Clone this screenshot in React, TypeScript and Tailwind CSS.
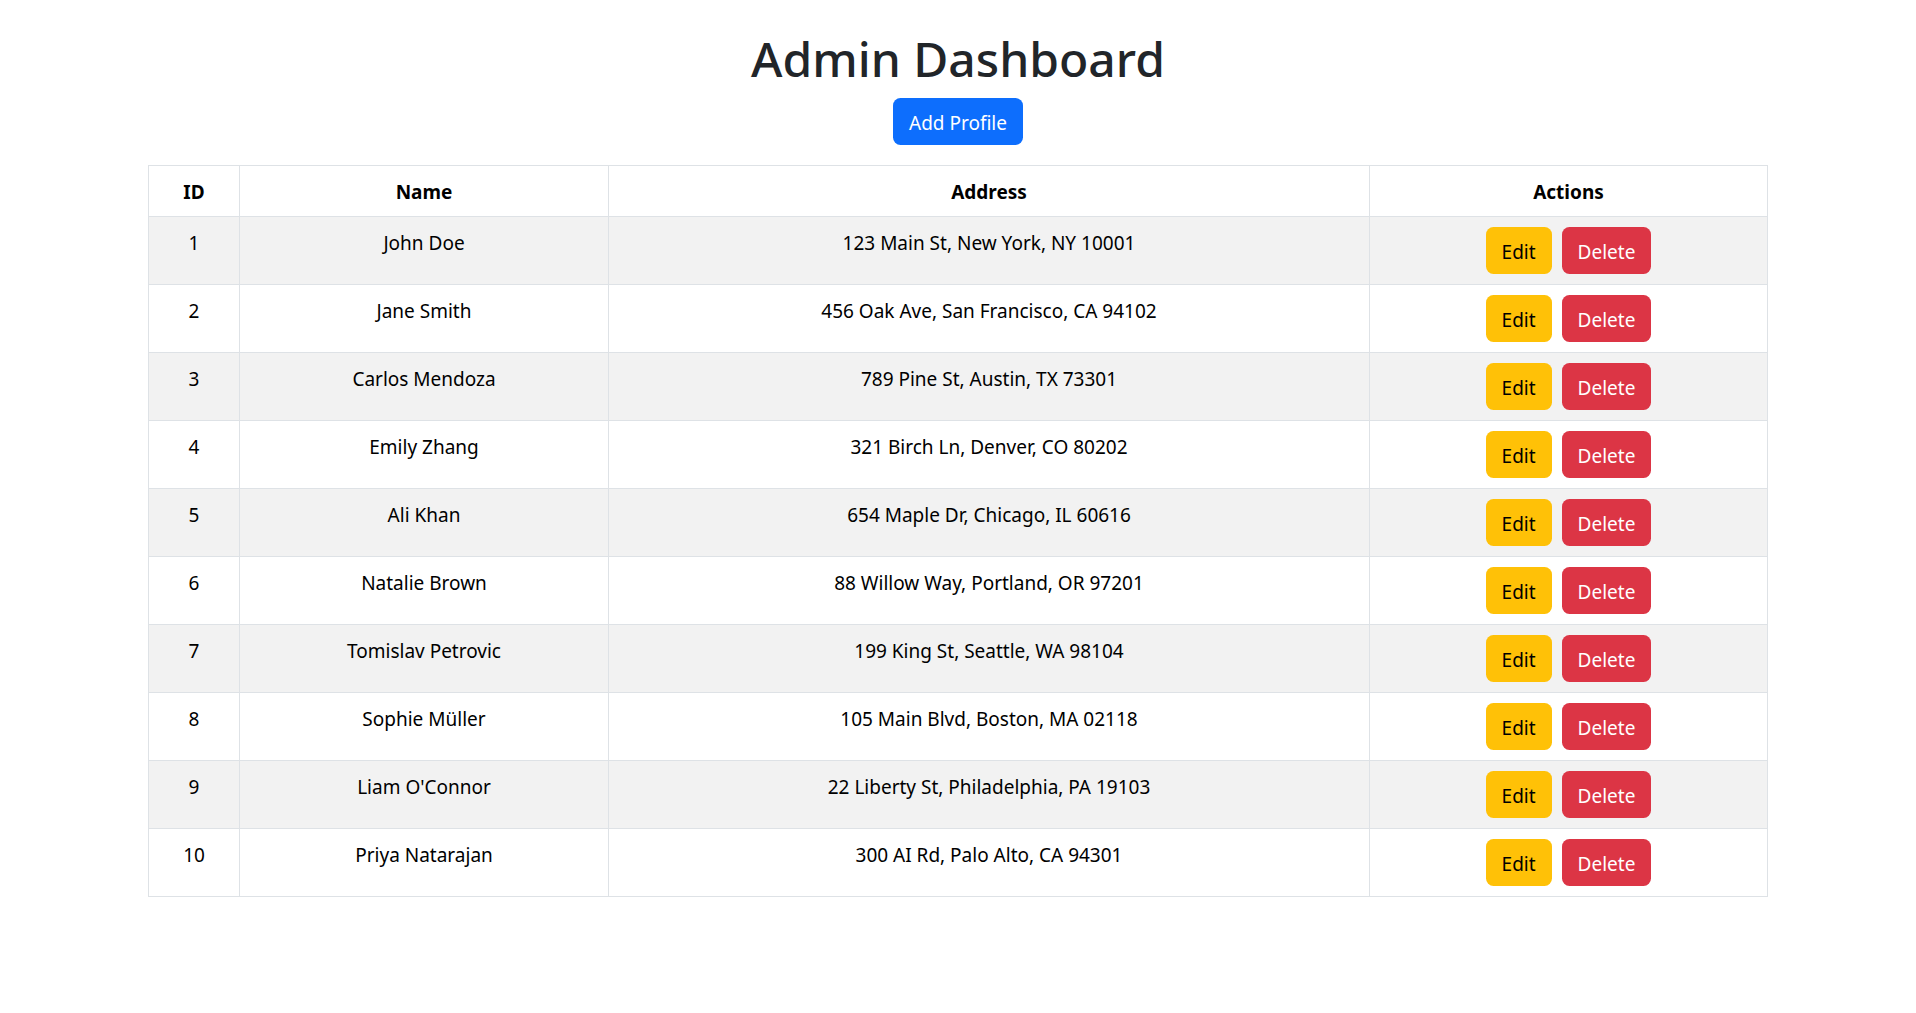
import React from 'react';

const profiles = [
  { id: 1, name: 'John Doe', address: '123 Main St, New York, NY 10001' },
  { id: 2, name: 'Jane Smith', address: '456 Oak Ave, San Francisco, CA 94102' },
  { id: 3, name: 'Carlos Mendoza', address: '789 Pine St, Austin, TX 73301' },
  { id: 4, name: 'Emily Zhang', address: '321 Birch Ln, Denver, CO 80202' },
  { id: 5, name: 'Ali Khan', address: '654 Maple Dr, Chicago, IL 60616' },
  { id: 6, name: 'Natalie Brown', address: '88 Willow Way, Portland, OR 97201' },
  { id: 7, name: 'Tomislav Petrovic', address: '199 King St, Seattle, WA 98104' },
  { id: 8, name: 'Sophie Müller', address: '105 Main Blvd, Boston, MA 02118' },
  { id: 9, name: "Liam O'Connor", address: '22 Liberty St, Philadelphia, PA 19103' },
  { id: 10, name: 'Priya Natarajan', address: '300 AI Rd, Palo Alto, CA 94301' },
];

export default function App() {
  return (
    <div className="min-h-screen bg-white font-['Noto_Sans',sans-serif] text-[#212529]">
      <div className="w-[1620px] mx-auto text-center">
        {/* header */}
        <h1 className="pt-[29px] mb-[9px] text-[48px] leading-[60px] font-medium">Admin Dashboard</h1>
        <button className="bg-[#0d6efd] text-white text-[19px] leading-[30px] px-[15px] pt-[8.5px] pb-[6.5px] border border-transparent rounded-[7.5px]">
          Add Profile
        </button>

        {/* table */}
        <table className="mt-[20px] w-full table-fixed border-collapse text-black text-[19px] leading-[30px]">
          <colgroup>
            <col className="w-[91px]" />
            <col className="w-[369px]" />
            <col className="w-[761px]" />
            <col className="w-[398px]" />
          </colgroup>
          <thead>
            <tr>
              {['ID', 'Name', 'Address', 'Actions'].map((h) => (
                <th key={h} className="border border-[#dee2e6] px-[10px] pt-[11px] pb-[9px] font-bold align-top">
                  {h}
                </th>
              ))}
            </tr>
          </thead>
          <tbody>
            {profiles.map((p, i) => (
              <tr key={p.id} className={i % 2 === 0 ? 'bg-[#f2f2f2]' : 'bg-white'}>
                <td className="border border-[#dee2e6] px-[10px] pt-[11px] pb-[9px] align-top">{p.id}</td>
                <td className="border border-[#dee2e6] px-[10px] pt-[11px] pb-[9px] align-top">{p.name}</td>
                <td className="border border-[#dee2e6] px-[10px] pt-[11px] pb-[9px] align-top">{p.address}</td>
                <td className="border border-[#dee2e6] p-[10px] align-top">
                  <div className="flex justify-center gap-[10px]">
                    <button className="bg-[#ffc107] text-black px-[15px] pt-[8.5px] pb-[6.5px] border border-transparent rounded-[7.5px]">
                      Edit
                    </button>
                    <button className="bg-[#dc3545] text-white px-[15px] pt-[8.5px] pb-[6.5px] border border-transparent rounded-[7.5px]">
                      Delete
                    </button>
                  </div>
                </td>
              </tr>
            ))}
          </tbody>
        </table>
      </div>
    </div>
  );
}
